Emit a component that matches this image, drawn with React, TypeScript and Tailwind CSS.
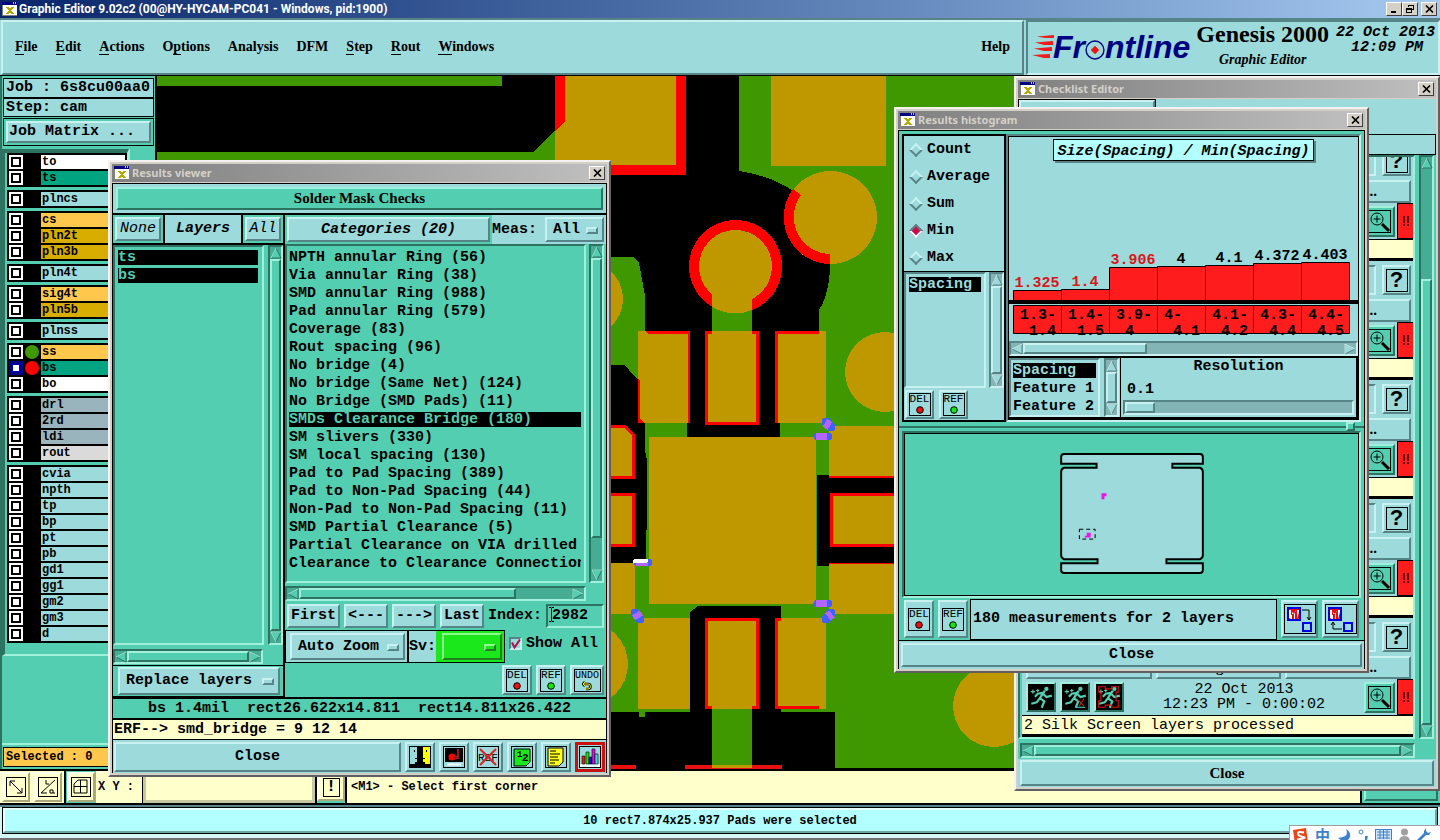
import React from 'react';
import clsx from 'clsx';

// Motif style bevels, one pair per surface colour
const paleUp = 'border-2 border-t-[#c9f1f1] border-l-[#c9f1f1] border-r-[#578486] border-b-[#578486] bg-[#9cdadb]';
const paleIn = 'border-2 border-t-[#578486] border-l-[#578486] border-r-[#c9f1f1] border-b-[#c9f1f1] bg-[#9cdadb]';
const greenUp = 'border-2 border-t-[#a0f0dc] border-l-[#a0f0dc] border-r-[#2e7361] border-b-[#2e7361] bg-[#54ceb0]';
const greenIn = 'border-2 border-t-[#2e7361] border-l-[#2e7361] border-r-[#a0f0dc] border-b-[#a0f0dc] bg-[#54ceb0]';
const creamUp = 'border-2 border-t-[#ffffee] border-l-[#ffffee] border-r-[#a8a878] border-b-[#a8a878] bg-[#ffffcc]';
const serif = "font-['Liberation_Serif',serif]";

type Tone = 'pale' | 'green';

const menus: [string, number][] = [
  ['File', 0],
  ['Edit', 0],
  ['Actions', 0],
  ['Options', 1],
  ['Analysis', -1],
  ['DFM', -1],
  ['Step', 0],
  ['Rout', 0],
  ['Windows', 0],
];

const sky = 'bg-[#9cdadb]';
const amber = 'bg-[#ffc84c]';
const ochre = 'bg-[#d9ac00]';
const slate = 'bg-[#9ab4be]';

type Layer = { name: string; bg: string; dot?: string; work?: boolean };

const layerGroups: Layer[][] = [
  [{ name: 'to', bg: 'bg-white' }, { name: 'ts', bg: 'bg-[#00a480]' }],
  [{ name: 'plncs', bg: sky }],
  [{ name: 'cs', bg: amber }, { name: 'pln2t', bg: ochre }, { name: 'pln3b', bg: ochre }],
  [{ name: 'pln4t', bg: sky }],
  [{ name: 'sig4t', bg: amber }, { name: 'pln5b', bg: ochre }],
  [{ name: 'plnss', bg: sky }],
  [
    { name: 'ss', bg: amber, dot: 'bg-[#409800]' },
    { name: 'bs', bg: 'bg-[#00a480]', dot: 'bg-[#ff0000]', work: true },
    { name: 'bo', bg: 'bg-white' },
  ],
  [
    { name: 'drl', bg: slate },
    { name: '2rd', bg: slate },
    { name: 'ldi', bg: slate },
    { name: 'rout', bg: 'bg-[#dadada]' },
  ],
  ['cvia', 'npth', 'tp', 'bp', 'pt', 'pb', 'gd1', 'gg1', 'gm2', 'gm3', 'd'].map((name) => ({ name, bg: sky })),
];

const categories = [
  'NPTH annular Ring (56)',
  'Via annular Ring (38)',
  'SMD annular Ring (988)',
  'Pad annular Ring (579)',
  'Coverage (83)',
  'Rout spacing (96)',
  'No bridge (4)',
  'No bridge (Same Net) (124)',
  'No Bridge (SMD Pads) (11)',
  'SMDs Clearance Bridge (180)',
  'SM slivers (330)',
  'SM local spacing (130)',
  'Pad to Pad Spacing (389)',
  'Pad to Non-Pad Spacing (44)',
  'Non-Pad to Non-Pad Spacing (11)',
  'SMD Partial Clearance (5)',
  'Partial Clearance on VIA drilled',
  'Clearance to Clearance Connection',
];

const bars = [
  { value: '1.325', top: 129, from: '1.3-', to: '1.4', low: true },
  { value: '1.4', top: 128, from: '1.4-', to: '1.5', low: true },
  { value: '3.906', top: 106, from: '3.9-', to: '4', low: true },
  { value: '4', top: 105, from: '4-', to: '4.1' },
  { value: '4.1', top: 104, from: '4.1-', to: '4.2' },
  { value: '4.372', top: 102, from: '4.3-', to: '4.4' },
  { value: '4.403', top: 101, from: '4.4-', to: '4.5' },
];

const AppIcon = () => (
  <svg width="15" height="14" viewBox="0 0 15 14" className="shrink-0" shapeRendering="crispEdges">
    <rect width="15" height="14" fill="#808080" />
    <rect x="1" y="1" width="14" height="12" fill="#fff" />
    <rect width="15" height="3" fill="#000080" />
    <rect x="11" width="1" height="2" fill="#c0c0c0" />
    <rect x="13" width="1" height="2" fill="#c0c0c0" />
    <path d="M5 5l6 7M11 5l-6 7" stroke="#b8a800" strokeWidth="2" />
  </svg>
);

const WinButton = ({ label, children }: { label: string; children: React.ReactNode }) => (
  <button
    aria-label={label}
    className="flex h-[14px] w-[16px] shrink-0 items-center justify-center border border-t-white border-l-white border-r-[#404040] border-b-[#404040] bg-[#d4d0c8]"
  >
    <svg width="11" height="10" viewBox="0 0 11 10" fill="none" stroke="#000" shapeRendering="crispEdges">
      {children}
    </svg>
  </button>
);

const CloseX = () => (
  <WinButton label="Close window">
    <path d="M2 1.500l7 7M9 1.500l-7 7" strokeWidth="1.700" shapeRendering="auto" />
  </WinButton>
);

const Window = ({ title, className, children }: { title: string; className: string; children: React.ReactNode }) => (
  <section
    aria-label={title}
    className={clsx(
      'absolute flex flex-col border-2 border-t-[#f4f2ee] border-l-[#f4f2ee] border-r-[#606060] border-b-[#606060] bg-[#d4d0c8] p-[2px]',
      className
    )}
  >
    <header className="flex h-[18px] shrink-0 items-center gap-[3px] bg-linear-to-r from-[#808080] to-[#c0c0c0] pr-[2px] pl-[2px]">
      <AppIcon />
      <h2 className="flex-1 font-['Noto_Sans',sans-serif] text-[11px] text-[#d4d0c8]">{title}</h2>
      <CloseX />
    </header>
    <div className="mt-px flex min-h-0 flex-1 flex-col">{children}</div>
  </section>
);

const arrows = {
  up: 'M6 1L11 11H1Z',
  down: 'M6 11L1 1H11Z',
  left: 'M1 6L11 1V11Z',
  right: 'M11 6L1 1V11Z',
};

const Arrow = ({ dir, tone }: { dir: keyof typeof arrows; tone: Tone }) => (
  <svg width="12" height="12" viewBox="0 0 12 12" className="shrink-0">
    <path
      d={arrows[dir]}
      fill={tone === 'pale' ? '#9cdadb' : '#54ceb0'}
      stroke={tone === 'pale' ? '#578486' : '#2e7361'}
    />
    <path
      d={dir === 'down' ? 'M11 1H1L6 11' : dir === 'right' ? 'M1 11V1L11 6' : dir === 'left' ? 'M1 6L11 1' : 'M6 1L1 11'}
      fill="none"
      stroke={tone === 'pale' ? '#d8f6f6' : '#a0f0dc'}
    />
  </svg>
);

type ScrollProps = { tone?: Tone; horizontal?: boolean; start?: number; size?: number; className?: string };

// start and size of the thumb are fractions of the trough
const ScrollBar = ({ tone = 'green', horizontal, start = 0, size = 1, className }: ScrollProps) => (
  <div
    className={clsx(
      'flex shrink-0',
      horizontal ? 'h-[15px]' : 'w-[15px] flex-col',
      tone === 'pale' ? paleIn : greenIn,
      className
    )}
  >
    <div
      className={clsx(
        'flex min-h-0 min-w-0 flex-1',
        !horizontal && 'flex-col',
        tone === 'pale' ? 'bg-[#84b5b6]' : 'bg-[#46ac94]'
      )}
    >
      <Arrow dir={horizontal ? 'left' : 'up'} tone={tone} />
      <div className={clsx('flex min-h-0 min-w-0 flex-1', !horizontal && 'flex-col')}>
        <div style={{ flexGrow: start }} />
        <div className={tone === 'pale' ? paleUp : greenUp} style={{ flexGrow: size }} />
        <div style={{ flexGrow: 1 - start - size }} />
      </div>
      <Arrow dir={horizontal ? 'right' : 'down'} tone={tone} />
    </div>
  </div>
);

const OptionMenu = ({ label, value, className }: { label: string; value: string; className?: string }) => (
  <span className={clsx('relative flex', className)}>
    <select
      aria-label={label}
      className={clsx(
        'w-full appearance-none border-2 pl-[6px]',
        value ? paleUp : 'border-t-[#90ff90] border-l-[#90ff90] border-r-[#208020] border-b-[#208020] bg-[#1ae81a]'
      )}
    >
      <option>{value}</option>
    </select>
    <i
      className={clsx(
        'pointer-events-none absolute top-1/2 right-[6px] -mt-[3px] h-[7px] w-[12px]',
        value
          ? paleUp
          : 'border-2 border-t-[#90ff90] border-l-[#90ff90] border-r-[#208020] border-b-[#208020] bg-[#1ae81a]'
      )}
    />
  </span>
);

const TagButton = ({ tag, className }: { tag: 'DEL' | 'REF' | 'UNDO'; className?: string }) => (
  <button className={clsx('flex items-center justify-center', paleUp, className)}>
    <span
      className={clsx(
        'flex h-[23px] flex-col items-center overflow-hidden border border-black leading-[11px] font-normal',
        tag === 'UNDO' ? 'w-[27px] text-[10px]' : 'w-[22px] text-[11px]'
      )}
    >
      {tag}
      <svg width="10" height="10" viewBox="0 0 10 10">
        {tag === 'UNDO' ? (
          <path d="M3 1L1 3l2 2M1 3h5a2.500 2.500 0 0 1 0 5H4" fill="none" stroke="#000" strokeWidth="2.600" />
        ) : (
          <circle cx="5" cy="5" r="3.300" fill={tag === 'DEL' ? '#e81010' : '#10e810'} stroke="#000" />
        )}
        {tag === 'UNDO' && <path d="M3 1L1 3l2 2M1 3h5a2.500 2.500 0 0 1 0 5H4" fill="none" stroke="#ffff00" />}
      </svg>
    </span>
  </button>
);

const reportIcons: { label: string; alert?: boolean; art: React.ReactNode }[] = [
  {
    label: 'Flashlight',
    art: (
      <>
        <rect x="12" width="10" height="22" fill="#ffff00" />
        <path d="M0 18h6v-2h2v-3H6v-1h2V0h6v12h2v1h-2v3h2v2h6v4H0zM5 4h1v2H5zM17 4h1v2h-1z" fill="#000" />
      </>
    ),
  },
  {
    label: 'Record',
    art: (
      <>
        <rect x="2" y="2" width="18" height="14" fill="#000" />
        <path d="M14 3h2v10h-2z" fill="#a01818" />
        <circle cx="9" cy="11" r="3.500" fill="#f00" />
        <path d="M10 10h5v3h-5z" fill="#a01818" />
        <path d="M4 18.500h14" stroke="#fff" strokeWidth="2" />
      </>
    ),
  },
  {
    label: 'Clear reference',
    art: (
      <>
        <text x="11" y="15" textAnchor="middle" fontSize="11" fontWeight="400">REF</text>
        <path d="M3 3l16 16M19 3L3 19" stroke="#e02020" strokeWidth="2" />
      </>
    ),
  },
  {
    label: 'Half',
    art: (
      <>
        <path d="M3 3h16v13l-4 4H3z" fill="#1ae81a" stroke="#000" />
        <text x="6" y="11" fontSize="9">1</text>
        <text x="11" y="15" fontSize="11">2</text>
      </>
    ),
  },
  {
    label: 'Report',
    art: (
      <>
        <path d="M3 2h15v14l-4 4H3z" fill="#ffff20" stroke="#000" />
        <path d="M5 5h6M5 8h10M5 11h8M5 14h9M5 17h5" stroke="#000" />
      </>
    ),
  },
  {
    label: 'Histogram',
    alert: true,
    art: (
      <>
        <path d="M1 18h20v3H1z" fill="#e8ffff" />
        <g stroke="#000" strokeWidth=".6">
          <path d="M3 10h3v8H3z" fill="#e02020" />
          <path d="M7 6h3v12H7z" fill="#10e810" />
          <path d="M10 11h3v7h-3z" fill="#1010e0" />
          <path d="M13 3h3v15h-3z" fill="#e010e0" />
          <path d="M16 8h3v10h-3z" fill="#30e0e0" />
        </g>
      </>
    ),
  },
];

const ResultsViewer = () => (
  <Window title="Results viewer" className="top-[160px] left-[108px] h-[617px] w-[503px]">
    <div className="flex min-h-0 flex-1 flex-col border border-b-0 border-black bg-[#9cdadb]">
      <h3 className={clsx('m-[3px] shrink-0 text-center text-[15px] leading-[19px]', serif, greenUp)}>
        Solder Mask Checks
      </h3>

      <div className="flex min-h-0 flex-1 border-y-2 border-black bg-[#54ceb0]">
        <div className="flex w-[170px] shrink-0 flex-col">
          <div className="flex h-[30px] shrink-0 border-b-2 border-black font-normal italic">
            <div className="flex w-[50px] p-[2px]">
              <button className={clsx('flex-1 italic', paleUp)}>None</button>
            </div>
            <div className="flex flex-1 items-center justify-center border-x-2 border-black bg-[#9cdadb] font-bold">
              Layers
            </div>
            <div className="flex w-[40px] p-[2px]">
              <button className={clsx('flex-1 italic', paleUp)}>All</button>
            </div>
          </div>
          <div className="flex min-h-0 flex-1 gap-1">
            <ul className={clsx('flex-1 p-[3px] pr-[4px]', greenIn)}>
              {['ts', 'bs'].map((name) => (
                <li key={name} className="mb-[3px] h-[15px] bg-black leading-[15px] text-[#54ceb0]">
                  {name}
                </li>
              ))}
            </ul>
            <ScrollBar />
          </div>
          <ScrollBar horizontal className="mt-1 mr-[20px]" />
          <div className="mt-px flex h-[32px] shrink-0 border-y border-black py-px pr-[3px] pl-[5px]">
            <OptionMenu label="Layer mode" value="Replace layers" className="flex-1" />
          </div>
        </div>

        <div className="flex min-w-0 flex-1 flex-col border-l-2 border-black">
          <div className="flex h-[29px] shrink-0">
            <div className="flex flex-1 p-[2px]">
              <button className={clsx('flex-1 italic', paleUp)}>Categories (20)</button>
            </div>
            <div className="flex w-[114px] items-center gap-2 bg-[#9cdadb] py-[2px] pr-[2px]">
              <span>Meas:</span>
              <OptionMenu label="Measurements" value="All" className="h-full flex-1" />
            </div>
          </div>

          <div className="flex min-h-0 flex-1 gap-[3px] pr-[2px]">
            <ul className={clsx('min-w-0 flex-1 pt-[4px] pr-[3px] pl-[2px]', greenIn)}>
              {categories.map((name) => (
                <li
                  key={name}
                  className={clsx(
                    'mb-[3px] h-[15px] overflow-hidden leading-[15px] whitespace-nowrap',
                    name.startsWith('SMDs') && 'bg-black text-[#54ceb0]'
                  )}
                >
                  {name}
                </li>
              ))}
            </ul>
            <ScrollBar size={0.9} />
          </div>
          <ScrollBar horizontal size={0.79} className="mt-[3px] mr-[20px]" />

          <div className="flex h-[29px] shrink-0 items-center gap-1 px-[2px]">
            <button className={clsx('h-[24px] w-[53px]', paleUp)}>First</button>
            <button className={clsx('h-[24px] w-[44px]', paleUp)}>&lt;---</button>
            <button className={clsx('h-[24px] w-[44px]', paleUp)}>---&gt;</button>
            <button className={clsx('h-[24px] w-[44px]', paleUp)}>Last</button>
            <label htmlFor="index">Index:</label>
            <span className="relative flex flex-1">
              <input id="index" defaultValue="2982" className={clsx('h-[24px] w-full min-w-0 pl-[4px]', greenIn)} />
              <svg width="7" height="15" className="absolute top-[3px] left-[2px]" fill="none" stroke="#000">
                <path d="M1 .5h2l.5.5.5-.5h2M3.500 1v13M1 14.500h2l.5-.5.5.5h2" />
              </svg>
            </span>
          </div>

          <div className="flex h-[33px] shrink-0 items-center">
            <div className="flex h-full items-center border border-black">
              <div className="flex h-full border-r-2 border-black bg-[#9cdadb] p-[2px] pl-[4px]">
                <OptionMenu label="Zoom mode" value="Auto Zoom" className="w-[115px]" />
              </div>
              <span className="flex h-full items-center bg-[#9cdadb]">Sv:</span>
              <div className="flex h-full bg-[#1ae81a] p-[2px] pl-[6px]">
                <OptionMenu label="Severity" value="" className="w-[60px]" />
              </div>
            </div>
            <label className="mb-[6px] ml-1 flex items-center gap-1 whitespace-nowrap">
              <span className="relative flex">
                <input type="checkbox" defaultChecked className={clsx('size-[13px] appearance-none', paleIn)} />
                <svg width="13" height="13" className="absolute inset-0">
                  <path d="M3 5.500l2.500 5L11 2.500" fill="none" stroke="#b01050" strokeWidth="2" />
                </svg>
              </span>
              Show All
            </label>
          </div>

          <div className="flex h-[34px] shrink-0 items-center justify-end gap-1 pr-[2px]">
            <TagButton tag="DEL" className="h-[30px] w-[30px]" />
            <TagButton tag="REF" className="h-[30px] w-[30px]" />
            <TagButton tag="UNDO" className="h-[30px] w-[34px]" />
          </div>
        </div>
      </div>

      <p className="h-[19px] shrink-0 bg-[#54ceb0] pl-[35px] leading-[19px] whitespace-pre">
        {'bs 1.4mil  rect26.622x14.811  rect14.811x26.422'}
      </p>
      <p className="h-[22px] shrink-0 border-t-2 border-b border-black bg-[#ffffcc] pl-px leading-[19px]">
        ERF--&gt; smd_bridge = 9 12 14
      </p>
      <div className="flex h-[33px] shrink-0 items-center gap-1 px-px">
        <button className={clsx('h-[30px] flex-1', paleUp)}>Close</button>
        {reportIcons.map((icon) => (
          <button
            key={icon.label}
            aria-label={icon.label}
            className={clsx(
              'flex size-[30px] items-center justify-center',
              icon.alert ? 'border-3 border-[#cc1010] bg-[#9cdadb]' : paleUp
            )}
          >
            <svg width="22" height="22" viewBox="0 0 22 22">
              {icon.art}
              <rect x=".5" y=".5" width="21" height="21" fill="none" stroke="#000" />
            </svg>
          </button>
        ))}
      </div>
    </div>
  </Window>
);

const BoardOutline = () => (
  <svg width="144" height="122" viewBox="0 0 146 124" className="mt-[19px]">
    <path
      d="M1 4Q1 1 4 1H142Q145 1 145 4V11H114V15H142Q145 16 145 19V104Q145 107 142 108H108V112H145V119Q145 122 142 122H4Q1 122 1 119V112H38V108H4Q1 107 1 104V19Q1 16 4 15H37V11H1Z"
      fill="#9cdadb"
      stroke="#000"
      strokeWidth="2"
    />
    <path d="M42 41h5v3h-2v3h-3zM25 84h2v-3h4v5h-6z" fill="#f010f0" />
    <rect x="19.500" y="77.500" width="16" height="10" fill="none" stroke="#000" strokeDasharray="4 3" />
  </svg>
);

const TransferIcon = ({ back }: { back?: boolean }) => (
  <svg width="32" height="30" viewBox="0 0 32 30" fill="none">
    <rect x=".5" y=".5" width="31" height="29" stroke="#000" />
    <path d="M4 4h12v12H4z" fill="#e01010" stroke="#0000e0" strokeWidth="2" />
    <path d="M6 8l2 3V8l2 2 2-3v3l2-4v9H6z" fill="#e01010" />
    <path d="M5 6h2v5h1V8l2 2 2-3v3l1 1V6h2v2l-2 7H7l-2-1z" fill="#f0ffff" />
    <path d="M8 10h2v5H8zM11 8h2v7h-2z" fill="#e01010" />
    <path d="M19 19h8v8h-8z" stroke="#0000e0" strokeWidth="2" />
    <path d={back ? 'M17 25H8v-7M6 21l2-3 2 3' : 'M18 6h7v10M23 13l2 3 2-3'} stroke="#000" />
  </svg>
);

const Histogram = () => (
  <Window title="Results histogram" className="top-[107px] left-[894px] h-[566px] w-[475px]">
    <div className="flex min-h-0 flex-1 flex-col border border-b-0 border-black bg-[#54ceb0]">
      <div className="flex h-[291px] shrink-0 px-[3px] pt-[3px]">
        <div className="flex w-[104px] flex-col border-2 border-black bg-[#9cdadb]">
          <fieldset className="border-b border-black">
            {['Count', 'Average', 'Sum', 'Min', 'Max'].map((name) => (
              <label key={name} className="flex h-[27px] items-center gap-[6px] pl-[7px]">
                <input
                  type="radio"
                  name="statistic"
                  defaultChecked={name === 'Min'}
                  className="size-[10px] rotate-45 appearance-none border-2 border-t-[#c9f1f1] border-l-[#c9f1f1] border-r-[#578486] border-b-[#578486] checked:border-t-[#578486] checked:border-l-[#578486] checked:border-r-[#f0ffff] checked:border-b-[#f0ffff] checked:bg-[#d00848]"
                />
                {name}
              </label>
            ))}
          </fieldset>
          <div className="flex min-h-0 flex-1 gap-[3px]">
            <div className={clsx('min-w-0 flex-1 p-[3px]', paleIn)}>
              <div className="h-[15px] bg-black leading-[15px] text-[#9cdadb]">Spacing</div>
            </div>
            <ScrollBar tone="pale" />
          </div>
          <div className="flex gap-[5px] px-px pt-[2px] pb-px">
            <TagButton tag="DEL" className="size-[29px]" />
            <TagButton tag="REF" className="size-[29px]" />
          </div>
        </div>

        <div className={clsx('flex min-w-0 flex-1 flex-col', paleIn)}>
          <div className="flex min-h-0 flex-1 flex-col border border-b-3 border-black">
            <div className="mx-auto mt-[2px] h-[22px] border border-black bg-[#b3ffff] px-[3px] pt-[3px] whitespace-nowrap italic shadow-[2px_2px_0_#578486]">
              Size(Spacing) / Min(Spacing)
            </div>
            <svg className="h-[180px] w-full text-[15px]" stroke="none">
              {bars.map((bar, i) => (
                <g key={bar.from} transform={`translate(${4 + i * 48} 0)`}>
                  <text x="24" y={bar.top - 3} textAnchor="middle" fill={bar.low ? '#d81818' : '#000'}>
                    {bar.value}
                  </text>
                  <path
                    d={`M.5 ${bar.top + 0.5}h48V140H.5zM.5 144.500h48v28H.5z`}
                    fill="#ff1c1c"
                    stroke="#000"
                  />
                  <text x="7" y="158">{bar.from}</text>
                  <text x="16" y="174">{bar.to}</text>
                </g>
              ))}
              <rect y="139" width="100%" height="4" />
            </svg>
            <ScrollBar tone="pale" horizontal size={0.38} />
            <div className="flex min-h-0 flex-1 border-t-2 border-black">
              <div className={clsx('w-[91px] p-[2px] pt-[3px]', paleIn)}>
                <ul>
                  {['Spacing', 'Feature 1', 'Feature 2'].map((name, i) => (
                    <li key={name} className={clsx('mb-[3px] h-[15px] leading-[15px] whitespace-nowrap', !i && 'bg-black text-[#9cdadb]')}>
                      {name}
                    </li>
                  ))}
                </ul>
              </div>
              <ScrollBar tone="pale" className="ml-[4px]" />
              <div className="ml-px flex flex-1 flex-col justify-between border-r-2 border-l border-black px-[2px] pb-[2px]">
                <label htmlFor="resolution" className="text-center">Resolution</label>
                <output className="mt-[4px] pl-[4px]">0.1</output>
                <input
                  id="resolution"
                  type="range"
                  defaultValue={0}
                  className={clsx(
                    'h-[15px] w-full appearance-none bg-[#84b5b6]! [&::-webkit-slider-thumb]:h-[11px] [&::-webkit-slider-thumb]:w-[30px] [&::-webkit-slider-thumb]:appearance-none [&::-webkit-slider-thumb]:border-2 [&::-webkit-slider-thumb]:border-t-[#c9f1f1] [&::-webkit-slider-thumb]:border-l-[#c9f1f1] [&::-webkit-slider-thumb]:border-r-[#578486] [&::-webkit-slider-thumb]:border-b-[#578486] [&::-webkit-slider-thumb]:bg-[#9cdadb]',
                    paleIn
                  )}
                />
              </div>
            </div>
          </div>
        </div>
      </div>

      <div className="relative h-[9px] shrink-0">
        <hr className="mt-1 border-t-2 border-[#2e7361]" />
        <i className={clsx('absolute top-0 right-[9px] size-[9px]', greenUp)} />
      </div>

      <div className={clsx('mx-[3px] flex min-h-0 flex-1 flex-col', greenIn)}>
        <div className="flex flex-1 justify-center border border-black">
          <BoardOutline />
        </div>
      </div>

      <div className="flex h-[42px] shrink-0 items-center gap-1 px-[5px]">
        <TagButton tag="DEL" className="h-[38px] w-[30px]" />
        <TagButton tag="REF" className="h-[38px] w-[30px]" />
        <p className="-ml-[2px] flex h-[41px] flex-1 items-center border border-black bg-[#9cdadb] pl-[2px]">
          180 measurements for 2 layers
        </p>
        <button aria-label="Copy to layer" className={clsx('flex h-[38px] w-[37px] items-center justify-center', paleUp)}>
          <TransferIcon />
        </button>
        <button aria-label="Copy from layer" className={clsx('flex h-[38px] w-[37px] items-center justify-center', paleUp)}>
          <TransferIcon back />
        </button>
      </div>

      <div className="flex h-[29px] shrink-0 border-t border-black bg-[#9cdadb] p-[2px]">
        <button className={clsx('flex-1', paleUp)}>Close</button>
      </div>
    </div>
  </Window>
);

const RunIcon = ({ kind }: { kind: 'run' | 'marked' | 'profile' }) => (
  <svg width="26" height="26" viewBox="0 0 24 24" fill="none" strokeLinecap="square">
    <rect width="24" height="24" fill="#000" />
    <circle cx="17" cy="4.500" r="2" fill="#54ceb0" />
    <path d="M15 7l-4 6 4 3-2 5M11 13l-3 4-4 1M14 8l-5 1-2 2M14 9l3 3 4-1" stroke="#54ceb0" strokeWidth="2" />
    <path d="M3 7h3M4.500 5.500v3M8 6h2M9 5v2" stroke="#54ceb0" />
    {kind === 'marked' && <path d="M15 15l5 5M20 14l-4 6" stroke="#c02020" />}
    {kind === 'marked' && <path d="M14 21.500h7" stroke="#54ceb0" />}
    {kind === 'profile' && (
      <path d="M2.500 2.500h6v2h6v-2h6v5h-2v8h2v6h-6v-2h-6v2h-6v-6h2v-8h-2z" stroke="#e01010" />
    )}
  </svg>
);

type Check = { date?: string; duration?: string; message?: string };

const checks: Check[] = [
  {},
  {},
  {},
  {},
  { date: '22 Oct 2013', duration: '12:23 PM - 0:00:02', message: '2 Silk Screen layers processed' },
];

const CheckRow = ({ date, duration, message }: Check) => (
  <li className="flex h-[119px] shrink-0 flex-col bg-[#9cdadb]">
    <div className="flex h-[38px] items-center gap-[6px] pr-[2px] pl-[4px]">
      <div className={clsx('h-[30px] flex-1', paleIn)} />
      <button aria-label="Help" className={clsx('flex h-[30px] w-[29px] items-center justify-center', paleUp)}>
        <span className="flex h-[23px] w-[22px] items-center justify-center border border-black font-['Liberation_Sans',sans-serif] text-[22px] leading-[22px]">
          ?
        </span>
      </button>
    </div>
    <div className={clsx('flex h-[23px] gap-1 pr-[2px] pl-[4px] leading-[16px]', serif)}>
      <button aria-label="Action" className={clsx('flex-1', paleUp)} />
      <button aria-label="Log" className={clsx('flex-1 pb-[2px]', paleUp)}>{message && 'Log ...'}</button>
      <button className={clsx('flex-1 pb-[2px]', paleUp)}>Action ...</button>
    </div>
    <div className="flex min-h-0 flex-1 items-center">
      <div className="flex gap-1 pl-[4px]">
        {(['run', 'marked', 'profile'] as const).map((kind) => (
          <button key={kind} aria-label={kind} className={greenUp}>
            <RunIcon kind={kind} />
          </button>
        ))}
      </div>
      <p className="flex-1 text-center leading-[15px] font-normal">
        {date}
        <br />
        {duration}
      </p>
      <button aria-label="Zoom to result" className={clsx('mr-[2px] p-[2px]', greenUp)}>
        <svg width="23" height="23" viewBox="0 0 23 23" fill="none" stroke="#000">
          <rect x=".5" y=".5" width="22" height="22" />
          <circle cx="9" cy="9" r="6" />
          <path d="M5.500 9h7M9 5.500v7" />
          <path d="M14 14l7 7" strokeWidth="3" />
        </svg>
      </button>
      <div className="flex h-full w-[16px] items-center justify-center border border-r-0 border-black bg-[#ff1c1c]">
        <svg width="8" height="10" viewBox="0 0 8 10" fill="#600000">
          <path d="M1 0h2v7H1zM5 0h2v7H5zM1 8h2v2H1zM5 8h2v2H5z" />
        </svg>
      </div>
    </div>
    <p className="h-[22px] border-t border-b-3 border-black bg-[#ffffcc] pl-[2px] leading-[19px] font-normal">{message}</p>
  </li>
);

const Checklist = () => (
  <Window title="Checklist Editor" className="top-[76px] right-0 h-[715px] w-[426px]">
    <div className="flex min-h-0 flex-1 flex-col bg-[#54ceb0]">
      <div className="flex h-[56px] shrink-0 flex-col justify-between bg-[#9cdadb]">
        <div className="h-[30px] w-[138px] border border-black">
          <div className={clsx('h-full', paleUp)} />
        </div>
        <div className="h-[21px] border border-black" />
      </div>
      <div className="flex min-h-0 flex-1 gap-1 pr-[2px]">
        <ul className={clsx('flex min-w-0 flex-1 flex-col justify-end overflow-hidden pl-[2px]', greenIn)}>
          {checks.map((check, i) => (
            <CheckRow key={i} {...check} />
          ))}
        </ul>
        <ScrollBar start={0.2} size={0.8} />
      </div>
      <ScrollBar horizontal className="mt-1 mr-[21px] ml-[2px]" />
      <div className="mt-px flex h-[28px] shrink-0 bg-[#9cdadb] px-[2px] py-px">
        <button className={clsx('flex-1 text-[15px]', serif, paleUp)}>Close</button>
      </div>
    </div>
  </Window>
);

// board artwork in screen units, shifted so that its corner meets the canvas corner
const Board = () => (
  <svg className="block h-full w-full" shapeRendering="crispEdges">
    <g transform="translate(-157 -76)">
      <g fill="#409800">
        <path d="M157 76h345v10H157zM157 152h376l32-31v59H157z" />
        <path d="M739 76H1440V768H835V712H780V423H819V310Q830 293 830 263L793 191Q772 176 739 171Z" />
        <path d="M610 257h24l5 6 6 33v36l-7 8v41l-13-16h-15z" />
        <path d="M645 423h175v195H635V562h10z" />
        <path d="M610 614h80v98h-45v5h-6v-5h-29z" />
        <path d="M712 290h40v45h-40zM712 700h40v68h-40z" />
      </g>
      <path
        d="M687 331h93v106h-93zM610 365h14l14 15v45h7v25l2 10v40l-1 62h-36zM817 475h12v3h80v85h-80v3h-12zM690 612l8-6h83v106h-29v-3h-40v3h-22z"
        fill="#000"
      />
      <path d="M555 76h131v99H555zM705 331h54v94h-54zM705 618h54v91h-54zM610 425h15l10 10v44h-25zM610 493h25v54h-25zM830 493h90v54h-90z" fill="#f00" />
      <path d="M638 331h52v92h-52zM775 331h51v92h-51zM775 618h51v91h-51zM829 426h90v52h-90zM829 563h90v51h-90z" fill="#f00" />
      <path d="M610 765h26v4h-26zM685 765h97v4h-97z" fill="#e81010" />
      <circle cx="735.500" cy="266.500" r="46.500" fill="#f00" />
      <g fill="#bf9800">
        <path d="M565 76h111v89H555v-34l10-10zM771 76h115v90H771z" />
        <circle cx="830.500" cy="217.500" r="46.500" />
        <circle cx="735.500" cy="266.500" r="36.500" />
        <path d="M712 290v17Q732 318 752 310V290Z" />
        <circle cx="585" cy="299" r="38" />
        <circle cx="586" cy="664" r="42" />
        <circle cx="885" cy="372" r="40" />
        <circle cx="994" cy="706" r="41" />
        <path d="M638 331h8l2 3h40v89h-44l-4-4v-38l-2-3z" />
        <path d="M708 334h4v-3h40v3h4v88h-48zM778 334h41v-3h7v92h-48z" />
        <path d="M649 437h167v167H649z" />
        <path d="M610 428h14l8 8v40h-22zM610 496h22v48h-22zM610 563h25v51h-25z" />
        <path d="M829 426h90v50h-90zM833 496h90v48h-90zM829 564h90v50h-90z" />
        <path d="M638 618h52v91h-52zM708 621h48v85h-4v3h-40v-3h-4zM778 621h3v-3h45v91h-7v-3h-41z" />
        <path d="M712 765h40v3h-40z" />
      </g>
      <path d="M797 192A42 42 0 0 0 830 259" fill="none" stroke="#f00" strokeWidth="10" />
      <g stroke="#4060ff" strokeWidth="7" strokeLinecap="round">
        <path d="M817 436.500h12M637 562.500h12M817 603.500h12" />
        <path d="M826 422l5 5M635 613l5 6M831 613l-5 6" strokeWidth="9" />
      </g>
      <g stroke="#b266ff" strokeWidth="7">
        <path d="M816 436.500h11M636 562.500h12M816 603.500h11" />
        <path d="M825 423l5 3M636 613l3 5M832 614l-4 3" strokeWidth="9" />
      </g>
      <path d="M635 561h11" stroke="#fff" strokeWidth="4" strokeLinecap="round" />
    </g>
  </svg>
);

const LayerPanel = () => (
  <aside className="flex w-[157px] shrink-0 flex-col border-r-2 border-l-2 border-l-[#2e7361] border-r-black bg-[#54ceb0]">
    <div className="mt-[2px] px-px">
      <p className="border border-black bg-[#9cdadb] pl-[2px] leading-[18px]">Job : 6s8cu00aa0</p>
      <p className="border border-black bg-[#9cdadb] pl-[2px] leading-[17px]">Step: cam</p>
      <div className="mt-px flex border border-black p-[2px]">
        <button className={clsx('h-[22px] flex-1 pl-px text-left', paleUp)}>Job Matrix ...</button>
      </div>
    </div>
    <div className="mt-[3px] flex h-[507px] flex-none">
      <div className="flex flex-1 flex-col gap-[3px] border-t-4 border-r-2 border-b-2 border-l-3 border-t-[#2e7361] border-l-[#2e7361] border-r-[#a0f0dc] border-b-[#a0f0dc] pl-[2px]">
        {layerGroups.map((group) => (
          <ul key={group[0].name} className="bg-black py-px pr-[2px] pl-[2px]">
            {group.map((layer) => (
              <li key={layer.name} className="py-px">
                <label className="flex items-center">
                  <input
                    type="checkbox"
                    className={clsx(
                      'size-[14px] appearance-none border-2',
                      layer.work
                        ? 'border-[#000080] bg-white shadow-[inset_0_0_0_2px_#0000a8]'
                        : 'border-white bg-white shadow-[inset_0_0_0_2px_#000]'
                    )}
                  />
                  <i className={clsx('mx-[2px] size-[14px] rounded-full', layer.dot)} />
                  <span className={clsx('h-[14px] flex-1 pl-px text-[12px] leading-[14px]', layer.bg)}>{layer.name}</span>
                </label>
              </li>
            ))}
          </ul>
        ))}
      </div>
      <div className="w-[26px] border-l border-[#a0f0dc]" />
    </div>
    <div className="flex-1 border-b-2 border-[#a0f0dc]" />
    <p className="mx-px my-[2px] border border-black bg-[#ffc84c] pl-[2px] text-[12px] leading-[18px]">Selected : 0</p>
  </aside>
);

const ToolIcon = ({ label, d }: { label: string; d: string }) => (
  <button aria-label={label} className={clsx('flex h-[30px] w-[28px] items-center justify-center', creamUp)}>
    <svg width="20" height="20" viewBox="0 0 20 20" fill="none" stroke="#000">
      <rect x=".5" y=".5" width="19" height="19" />
      <path d={d} />
    </svg>
  </button>
);

const Logo = () => (
  <div className="flex items-center font-['Liberation_Sans',sans-serif] text-[32px] leading-[32px] text-[#000080] italic">
    <svg width="22" height="24" viewBox="0 0 22 24" fill="#ee1c1c">
      <path d="M5 1.500L22 0v3H13zM3 7.500L21 6v4H12zM2 13.500L20 12v4H12zM0 20l18-1v4H12z" />
    </svg>
    <span className="-ml-px">Fr</span>
    <svg width="20" height="20" viewBox="0 0 19 19" className="mt-[6px]">
      <circle cx="9.500" cy="9.500" r="8.500" fill="none" stroke="#000080" strokeWidth="1.300" />
      <path d="M9.500 5.500l4 4-4 4-4-4z" fill="#f01010" />
    </svg>
    <span>ntline</span>
  </div>
);

const InputBar = () => (
  <div className="absolute right-0 bottom-0 flex h-[15px] w-[151px] items-start gap-[7px] overflow-hidden border-t border-l border-[#a0a0a0] bg-white pt-[2px] pl-[2px] font-['Noto_Sans_CJK_SC',sans-serif] text-[15px] leading-[14px] text-[#3c82cc]">
    <svg width="16" height="16" viewBox="0 0 16 16" className="shrink-0">
      <path d="M1 2l13-2 2 14-13 2z" fill="#e84818" />
      <path d="M12 4.500Q6 3 6 5.500T11 9t-6 2.500" fill="none" stroke="#fff" strokeWidth="2" />
    </svg>
    <span>中</span>
    <svg width="14" height="14" viewBox="0 0 14 14" className="shrink-0" fill="#3c82cc">
      <path d="M9 1q4 8-8 9 8 7 12-1 1-5-4-8z" />
    </svg>
    <svg width="10" height="14" viewBox="0 0 10 14" className="shrink-0" fill="#3c82cc">
      <circle cx="3" cy="4" r="2" fill="none" stroke="#3c82cc" />
      <path d="M7 8h3l-1 4H7z" />
    </svg>
    <svg width="17" height="14" viewBox="0 0 17 14" className="shrink-0" fill="none" stroke="#3c82cc">
      <rect x=".5" y="1.500" width="16" height="11" fill="#d4e6f6" />
      <path d="M2 4h13M2 7h13M2 10h13M5 2v9M8.500 2v9M12 2v9" />
    </svg>
    <svg width="11" height="14" viewBox="0 0 11 14" className="shrink-0" fill="#a0a0a0">
      <circle cx="5.500" cy="4" r="3.500" />
      <path d="M0 14q0-6 5.500-6t5.500 6z" />
    </svg>
    <svg width="14" height="14" viewBox="0 0 14 14" className="shrink-0" fill="#3c82cc">
      <path d="M9 0L7 3v2L0 12l2 2 7-7h3l2-3-3 1-2-2z" />
    </svg>
  </div>
);

export default function App() {
  return (
    <div className="relative flex h-screen flex-col overflow-hidden bg-[#9cdadb] font-['Liberation_Mono',monospace] text-[15px] leading-[18px] font-bold text-black">
      <header className="flex h-[18px] shrink-0 items-center bg-linear-to-r from-[#0a246a] to-[#a6caf0] pr-[3px] pl-[2px]">
        <AppIcon />
        <h1 className="flex-1 pl-[2px] font-['Roboto',sans-serif] text-[12px] text-white">
          Graphic Editor 9.02c2 (00@HY-HYCAM-PC041 - Windows, pid:1900)
        </h1>
        <WinButton label="Minimize"><path d="M2 8h5" strokeWidth="2" /></WinButton>
        <WinButton label="Restore">
          <path d="M3.500 3V1.500h5v4H7M3 1.500h6M1.500 4.500h5v4h-5zM1 5h6" />
        </WinButton>
        <span className="w-[3px]" />
        <CloseX />
      </header>

      <div className="flex h-[58px] shrink-0 border-t-2 border-b border-t-[#578486] border-b-black">
        <nav className={clsx('ml-px flex flex-1 items-center gap-[18px] px-[12px] pb-[2px] text-[14px]', serif, paleUp)}>
          {menus.map(([name, hot]) => (
            <button key={name}>
              {hot < 0 ? name : (
                <>
                  {name.slice(0, hot)}
                  <span className="border-b border-black">{name[hot]}</span>
                  {name.slice(hot + 1)}
                </>
              )}
            </button>
          ))}
          <button className="ml-auto">Help</button>
        </nav>
        <div className={clsx('ml-[2px] flex w-[414px] items-center', paleIn)}>
          <div className="ml-1 pb-[2px]"><Logo /></div>
          <div className={clsx('mb-[4px] ml-[6px] text-center', serif)}>
            <p className="text-[24px] leading-[28px]">Genesis 2000</p>
            <p className="text-[14px] leading-[24px] italic">Graphic Editor</p>
          </div>
          <p className="mb-[16px] ml-auto pr-[3px] text-right leading-[15px] whitespace-nowrap italic">
            22 Oct 2013
            <br />
            <span className="mr-[12px]">12:09 PM</span>
          </p>
        </div>
      </div>

      <main className="flex min-h-0 flex-1">
        <LayerPanel />
        <div className="min-w-0 flex-1 bg-black">
          <Board />
        </div>
      </main>

      <div className="flex h-[36px] shrink-0 border-y-2 border-black bg-[#ffffcc] text-[12px]">
        <div className="flex items-center gap-[4px] border-r-2 border-black px-[2px]">
          <ToolIcon label="Select area" d="M4 4l12 12M4 9V4h5M16 11v5h-5" />
          <ToolIcon label="Angle" d="M3 16h6M3 16L17 3M8 3v4h3M12 13h3v3h-3zM15 16h2" />
        </div>
        <div className="flex items-center bg-[#54ceb0] px-px">
          <ToolIcon label="Grid" d="M3 16V7l4-4h9v13zM3 9.500h13M9.500 3v13" />
        </div>
        <label htmlFor="xy" className="flex w-[47px] items-center pl-[2px] whitespace-nowrap">X Y :</label>
        <input
          id="xy"
          className="w-[172px] border-3 border-x-[#c8c8a0] border-b-[#c8c8a0] border-t-[#a8a878] bg-[#ffffcc] outline outline-black"
        />
        <div className="flex items-center border-x-2 border-black bg-[#54ceb0]">
          <button className={clsx('flex size-[28px] items-center justify-center', creamUp)}>
            <span className="flex h-[19px] w-[17px] items-center justify-center border border-black text-[16px] leading-[16px]">!</span>
          </button>
        </div>
        <p className="flex flex-1 items-center pl-[4px]">&lt;M1&gt; - Select first corner</p>
        <div className="flex w-[80px] border-l-2 border-black bg-[#54ceb0] p-[2px]">
          <button className={clsx('flex-1', greenUp)}>Abort</button>
        </div>
      </div>

      <footer className="h-[35px] shrink-0 border-t-2 border-b-2 border-t-[#578486] border-b-[#707070] bg-[#d4f6f6] px-[2px] pb-[4px]">
        <div className="h-full border border-black">
          <p className="h-full border-2 border-t-[#e4ffff] border-l-[#e4ffff] border-r-[#6ca4a4] border-b-[#6ca4a4] bg-[#b3ffff] text-center text-[12px] leading-[22px]">
            10 rect7.874x25.937 Pads were selected
          </p>
        </div>
      </footer>

      <Checklist />
      <ResultsViewer />
      <Histogram />
      <InputBar />
    </div>
  );
}
